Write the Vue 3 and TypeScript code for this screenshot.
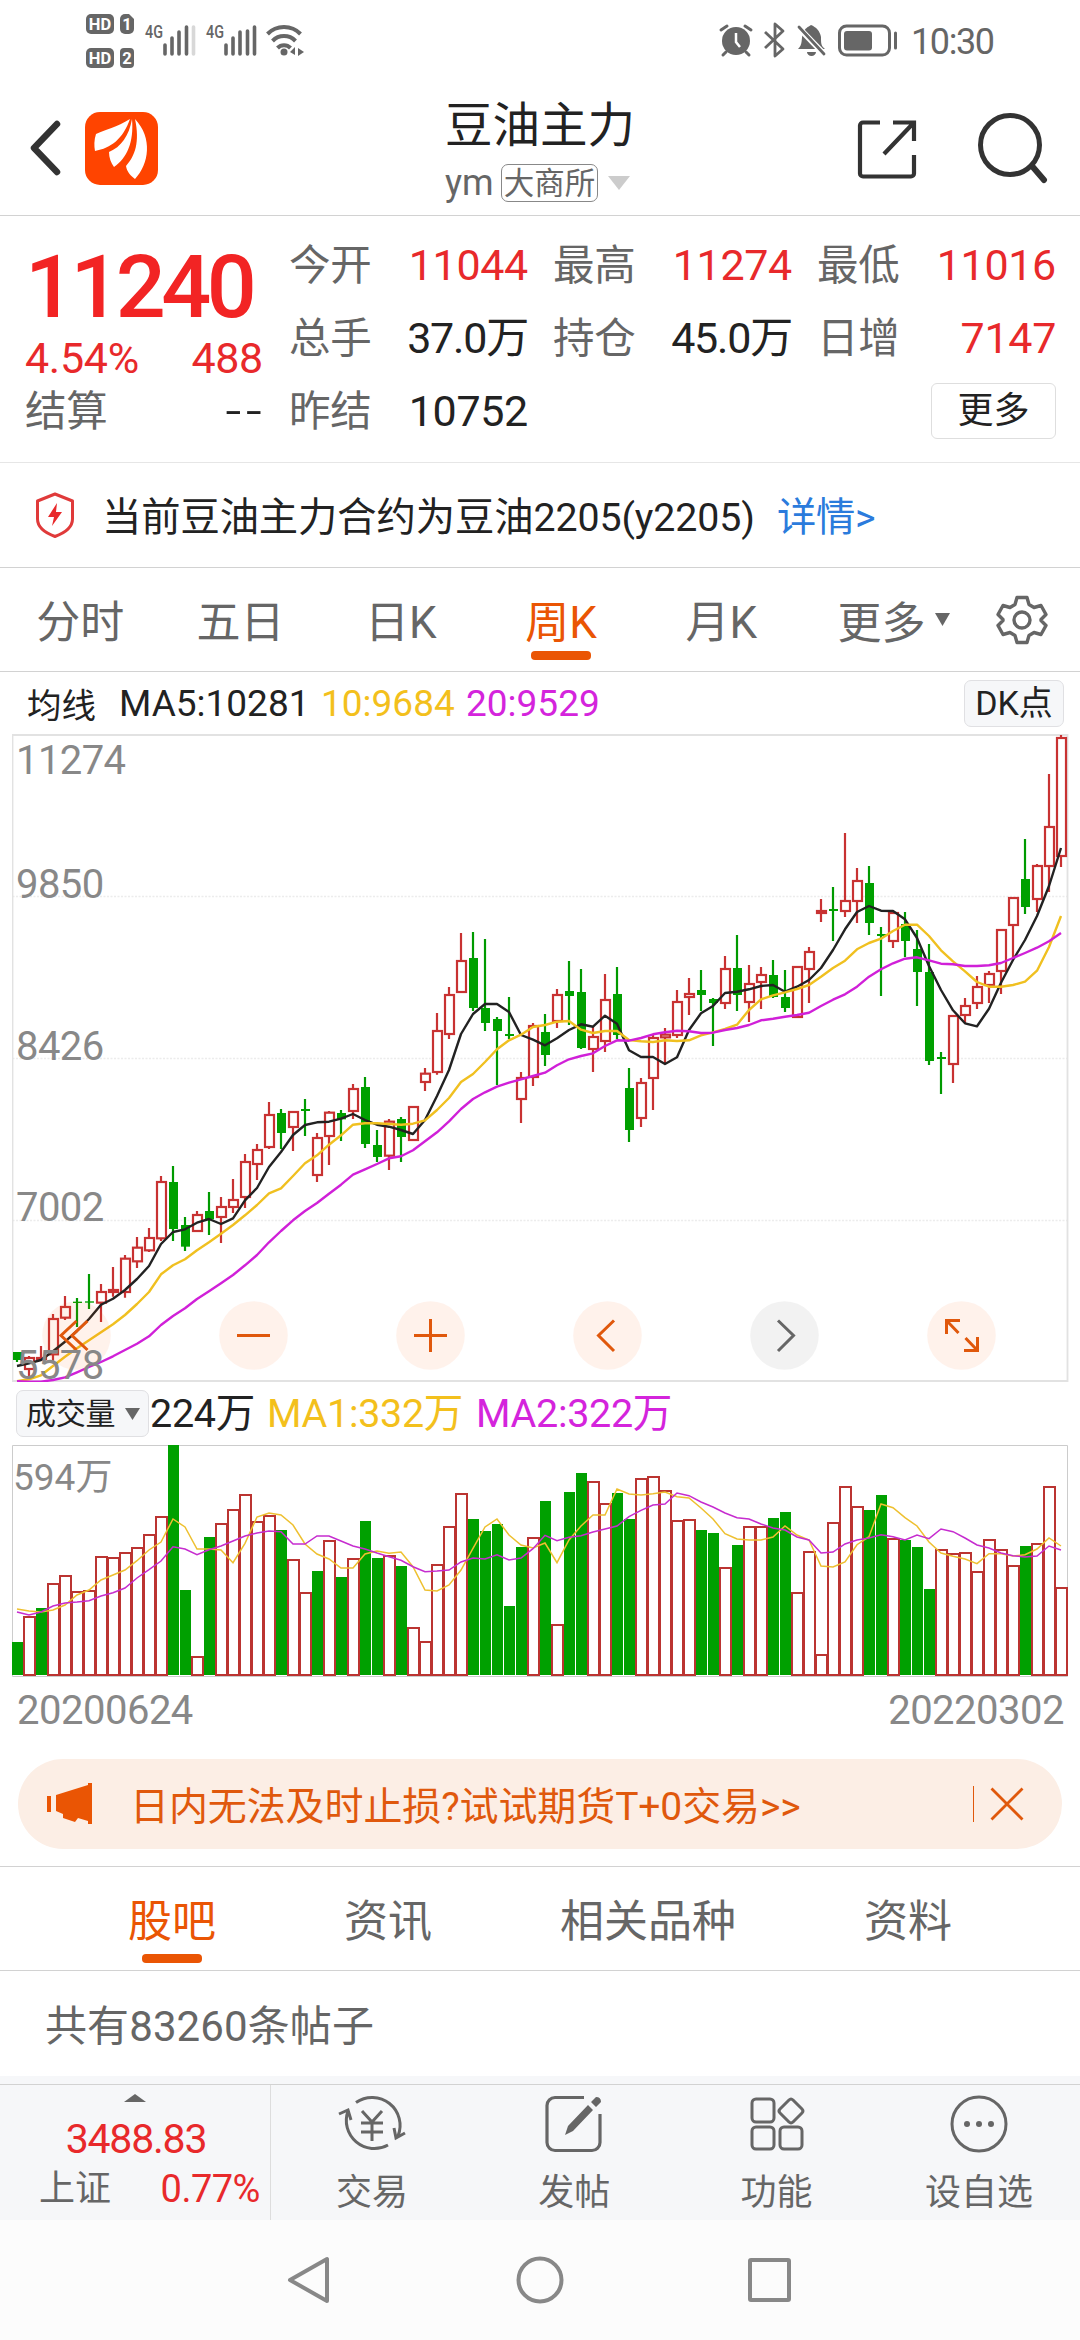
<script setup lang="ts">
interface Candle {
  x: number
  up: boolean
  high: number
  top: number
  bottom: number
  low: number
}

type Row = [0 | 1, number, number, number, number]

const STEP = 12
const cx = (i: number): number => 5 + STEP * i

// Price rows: [rising, high, body top, body bottom, low], in thirds of a pixel from the block's base line.
const priceBlocks: { base: number; rows: Row[] }[] = [
  {
    base: 396,
    rows: [
      [0, 666, 666, 690, 696], [1, 678, 684, 717, 738], [1, 648, 684, 688, 690], [1, 552, 567, 673, 692],
      [1, 498, 531, 563, 570], [0, 504, 515, 519, 591], [0, 432, 514, 518, 537], [1, 462, 486, 518, 576],
      [1, 411, 480, 486, 500], [1, 375, 386, 486, 503], [1, 321, 353, 394, 414], [1, 294, 324, 361, 366],
      [1, 138, 156, 325, 333], [0, 108, 156, 297, 333], [0, 261, 285, 350, 363], [1, 243, 255, 303, 306],
      [0, 186, 243, 268, 315], [1, 201, 231, 261, 339], [1, 147, 210, 231, 249], [1, 72, 96, 201, 234],
      [1, 42, 60, 102, 150],
    ],
  },
  {
    base: 166,
    rows: [
      [1, 606, 645, 741, 747], [0, 627, 639, 699, 747], [1, 633, 636, 681, 753], [0, 597, 627, 633, 708],
      [1, 699, 714, 825, 846], [1, 633, 638, 708, 795], [0, 630, 639, 658, 723], [1, 552, 567, 633, 657],
      [0, 531, 561, 732, 744], [0, 690, 735, 771, 786], [1, 657, 665, 767, 810], [0, 651, 657, 711, 786],
      [1, 618, 621, 720, 723], [1, 504, 521, 546, 573], [1, 339, 393, 516, 524], [1, 261, 285, 402, 417],
      [1, 99, 183, 276, 279], [0, 96, 174, 324, 333], [0, 117, 324, 369, 393], [0, 351, 357, 393, 555],
      [0, 291, 402, 408, 417], [1, 516, 534, 597, 669], [1, 369, 378, 531, 558], [0, 342, 396, 465, 498],
      [1, 267, 285, 363, 384], [0, 183, 273, 288, 375], [0, 207, 276, 444, 447], [1, 378, 411, 447, 516],
      [1, 222, 300, 423, 456], [0, 201, 282, 405, 417], [0, 504, 564, 690, 726], [1, 534, 549, 654, 681],
      [1, 405, 414, 534, 630], [1, 384, 404, 412, 492], [1, 270, 306, 405, 414], [1, 234, 282, 291, 345],
      [0, 210, 270, 285, 333], [0, 294, 297, 309, 438],
    ],
  },
  {
    base: -14,
    rows: [
      [1, 708, 747, 849, 867], [0, 645, 744, 825, 873], [1, 735, 792, 846, 906], [1, 741, 765, 786, 867],
      [0, 720, 765, 831, 834], [0, 750, 831, 864, 876], [1, 738, 741, 891, 894], [1, 681, 696, 747, 849],
      [1, 537, 573, 579, 606], [0, 501, 567, 573, 663], [1, 339, 543, 573, 591], [1, 444, 483, 543, 609],
      [0, 438, 489, 609, 645], [0, 621, 642, 648, 828], [1, 576, 579, 663, 684], [0, 576, 612, 663, 711],
      [0, 630, 687, 756, 858], [0, 672, 756, 1023, 1035], [0, 996, 1011, 1017, 1122], [1, 885, 888, 1032, 1089],
      [1, 834, 858, 885, 909], [1, 768, 801, 849, 867], [1, 753, 762, 795, 849], [1, 627, 630, 753, 822],
      [1, 531, 534, 615, 720], [0, 357, 477, 561, 582], [1, 432, 438, 537, 576], [1, 162, 321, 438, 516],
      [1, 45, 54, 408, 441],
    ],
  },
]

const candles: Candle[] = priceBlocks
  .flatMap(({ base, rows }) => rows.map(([up, ...v]) => ({ up: up === 1, v: v.map((n) => base + n / 3) })))
  .map(({ up, v }, i) => ({ x: cx(i), up, high: v[0], top: v[1], bottom: v[2], low: v[3] }))

const line = (blocks: [number, number[]][]): string =>
  blocks
    .flatMap(([base, values]) => values.map((v) => base + v / 3))
    .map((y, i) => `${cx(i)},${y.toFixed(1)}`)
    .join(' ')

const ma5 = line([
  [396, [708, 700, 690, 664, 635, 603, 567, 524, 506, 480, 447, 408, 342, 306, 298, 278, 267, 282, 265, 211, 174]],
  [166, [801, 756, 705, 675, 667, 665, 656, 642, 660, 674, 680, 690, 702, 660, 588, 510, 402, 342, 312, 312, 336, 405, 419, 436, 415, 390, 373, 380, 347, 371, 451, 471, 471, 492, 472, 390, 340, 318]],
  [-14, [819, 815, 808, 798, 795, 815, 800, 780, 744, 690, 628, 576, 558, 572, 573, 598, 654, 738, 810, 871, 910, 919, 866, 788, 720, 660, 588, 498, 384]],
])
const ma10 = line([
  [396, [754, 748, 736, 708, 680, 655, 631, 607, 583, 555, 522, 486, 433, 406, 388, 361, 337, 311, 285, 256, 225]],
  [166, [880, 865, 828, 790, 766, 734, 706, 674, 670, 670, 672, 674, 671, 661, 630, 594, 546, 522, 486, 448, 421, 404, 381, 375, 365, 363, 389, 399, 393, 393, 420, 424, 426, 421, 423, 421, 406, 397]],
  [-14, [927, 914, 870, 838, 826, 817, 807, 795, 770, 744, 722, 688, 669, 656, 633, 614, 614, 648, 691, 724, 754, 786, 800, 800, 795, 785, 752, 681, 588]],
])
const ma20 = line([
  [396, [754, 755, 755, 750, 742, 727, 711, 696, 679, 660, 641, 619, 585, 558, 535, 507, 484, 460, 435, 406, 375]],
  [166, [1027, 993, 961, 933, 909, 881, 854, 824, 808, 792, 775, 769, 751, 724, 697, 664, 627, 597, 577, 560, 548, 538, 528, 518, 496, 478, 468, 460, 438, 421, 422, 414, 403, 397, 392, 394, 399, 398]],
  [-14, [930, 924, 915, 901, 896, 890, 885, 878, 858, 839, 823, 800, 770, 748, 730, 716, 712, 721, 731, 733, 738, 738, 736, 729, 714, 699, 683, 664, 639]],
])

const volumeTops = [
  786, 711, 684, 612, 588, 636, 633, 531, 534, 519, 504, 465, 411, 195, 630, 831, 471, 432, 390, 345, 426, 408,
  450, 540, 639, 573, 483, 591, 537, 423, 534, 528, 558, 744, 786, 555, 441, 342, 417, 453, 432, 678, 501, 474,
  363, 735, 336, 279, 306, 372, 339, 417, 297, 291, 333, 423, 420, 450, 459, 564, 495, 441, 441, 414, 396, 639,
  516, 825, 429, 321, 381, 390, 345, 477, 480, 501, 627, 510, 522, 519, 576, 480, 510, 558, 498, 492, 321, 624,
]
const falling = new Set([
  0, 2, 13, 14, 16, 22, 25, 27, 29, 30, 32, 38, 39, 40, 41, 42, 44, 46, 47, 50, 51, 57, 58, 60, 63, 64, 71, 72, 74,
  75, 76, 84,
])
const volumes = volumeTops.map((v, i) => ({ x: cx(i), up: !falling.has(i), y: v / 3 - 65 }))

const volMa1 = line([[-65, [
  687, 693, 696, 690, 675, 645, 630, 600, 585, 570, 542, 510, 486, 417, 441, 507, 507, 510, 548, 490, 411, 399, 405,
  435, 492, 522, 537, 564, 564, 522, 513, 520, 516, 560, 630, 633, 615, 570, 505, 441, 417, 465, 495, 504, 489, 548,
  480, 438, 405, 405, 327, 342, 345, 341, 336, 350, 354, 384, 417, 461, 477, 480, 480, 471, 438, 465, 480, 558, 561,
  546, 494, 470, 372, 383, 413, 438, 486, 519, 529, 537, 551, 521, 521, 528, 524, 507, 474, 498,
]]])
const volMa2 = line([[-65, [
  696, 705, 696, 678, 669, 666, 662, 648, 638, 624, 594, 569, 543, 500, 507, 524, 509, 498, 483, 468, 459, 453, 455,
  492, 492, 468, 468, 483, 498, 507, 519, 530, 541, 560, 575, 573, 570, 546, 534, 537, 524, 540, 534, 506, 466, 482,
  472, 467, 456, 447, 438, 410, 391, 375, 372, 339, 347, 366, 381, 399, 413, 417, 432, 444, 450, 471, 480, 519, 516,
  492, 480, 474, 464, 470, 480, 465, 476, 447, 455, 474, 495, 504, 519, 527, 531, 528, 498, 510,
]]])

const axis = ['11274', '9850', '8426', '7002', '5578']

const quotes = [
  [
    { label: '今开', value: '11044', red: true },
    { label: '总手', value: '37.0万', red: false },
    { label: '昨结', value: '10752', red: false },
  ],
  [
    { label: '最高', value: '11274', red: true },
    { label: '持仓', value: '45.0万', red: false },
  ],
  [
    { label: '最低', value: '11016', red: true },
    { label: '日增', value: '7147', red: true },
  ],
]

const periods = ['分时', '五日', '日K', '周K', '月K']
const sections = ['股吧', '资讯', '相关品种', '资料']
</script>

<template>
  <div class="screen">
    <div class="status">
      <svg class="status-left" width="240" height="70" viewBox="80 0 240 70">
        <g fill="#666">
          <rect x="86" y="14" width="28" height="20" rx="5" />
          <path d="M120 19a5 5 0 0 1 5-5h4l5 5v10a5 5 0 0 1-5 5h-4a5 5 0 0 1-5-5z" />
          <rect x="86" y="48" width="28" height="20" rx="5" />
          <rect x="120" y="48" width="14" height="20" rx="4" />
        </g>
        <g class="badge" fill="#fff">
          <text x="100" y="30" text-anchor="middle">HD</text>
          <text x="127" y="30" text-anchor="middle">1</text>
          <text x="100" y="64" text-anchor="middle">HD</text>
          <text x="127" y="64" text-anchor="middle">2</text>
        </g>
        <g class="gen" fill="#666">
          <text x="145" y="38" textLength="18" lengthAdjust="spacingAndGlyphs">4G</text>
          <text x="206" y="38" textLength="18" lengthAdjust="spacingAndGlyphs">4G</text>
        </g>
        <g stroke="#666" stroke-width="3.600" stroke-linecap="round">
          <path d="M165 45V54M172 38V54M179 32V54M186.500 27V54" />
          <path d="M193.500 27V54" stroke="#d8d8d8" />
          <path d="M226 45V54M233 38V54M240 32V54M247.500 31V54M254.500 27V54" />
        </g>
        <g fill="none" stroke="#666" stroke-width="4">
          <path d="M267.500 34a23 23 0 0 1 33 0" />
          <path d="M272.500 41a16 16 0 0 1 23 0" />
          <path d="M277.500 48a9 9 0 0 1 13 0" />
        </g>
        <circle cx="284" cy="52" r="3.500" fill="#666" />
        <path d="M290 52l5-5v8zM298 48l6 4-6 4z" fill="#666" />
      </svg>
      <svg class="status-right" width="186" height="70" viewBox="714 0 186 70">
        <circle cx="736" cy="41" r="14" fill="#666" />
        <path d="M721 30l6-4M751 30l-6-4M726 52l-3 3M746 52l3 3" stroke="#666" stroke-width="3" stroke-linecap="round" />
        <path d="M736 33v9l4 5" fill="none" stroke="#fff" stroke-width="2.500" />
        <path d="M765 32l18 17-8 7V24l8 7-18 17" fill="none" stroke="#666" stroke-width="2.800" stroke-linejoin="round" />
        <path d="M798 49c5-4 3-11 5-16 2-5 5-6 8-8 5 2 9 6 10 12 0 6 0 9 4 12z" fill="#666" />
        <path d="M798 27l27 28" stroke="#fff" stroke-width="6" />
        <path d="M799 27l25 27" stroke="#666" stroke-width="2.800" stroke-linecap="round" />
        <path d="M807 52h9a4.500 4 0 0 1-9 0" fill="#666" />
        <rect x="839.500" y="26" width="50" height="29" rx="7" fill="none" stroke="#666" stroke-width="3" />
        <rect x="844" y="31" width="28" height="19.500" rx="3" fill="#666" />
        <path d="M895.500 33v15" stroke="#666" stroke-width="3" stroke-linecap="round" />
      </svg>
      <span class="clock">10:30</span>
    </div>

    <header class="header">
      <svg class="back" width="34" height="60" viewBox="0 0 34 60">
        <path d="M29 6L6 30l23 24" fill="none" stroke="#333" stroke-width="6.500" stroke-linecap="round" stroke-linejoin="round" />
      </svg>
      <svg class="logo" width="73" height="73" viewBox="0 0 73 73">
        <rect width="73" height="73" rx="15" fill="#ff4400" />
        <path d="M45 7C32 15 20 18 11 22c-2 6-2 12-1 17C26 36 38 27 45 7z" fill="#fff" />
        <path d="M47 7C44 24 36 35 24 40c0 6 2 11 5 15C42 46 49 30 47 7z" fill="#fff" />
        <path d="M50 7C55 30 50 44 41 54c1 6 5 10 9 13C64 52 68 26 50 7z" fill="#fff" />
      </svg>
      <div class="title">
        <div class="name">豆油主力</div>
        <div class="code">
          <span class="sym">ym</span><span class="exch">大商所</span>
          <svg width="22" height="14"><path d="M0 0h22L11 14z" fill="#ccc" /></svg>
        </div>
      </div>
      <svg class="share" width="60" height="60" viewBox="0 0 60 60">
        <path d="M23 3.500H6a3 3 0 0 0-3 3v48a3 3 0 0 0 3 3h48a3 3 0 0 0 3-3V36M36 3.500H57V22M57 3.500L27 35" fill="none" stroke="#333" stroke-width="4.200" />
      </svg>
      <svg class="search" width="70" height="72" viewBox="0 0 70 72">
        <circle cx="32" cy="33" r="29.500" fill="none" stroke="#333" stroke-width="5" />
        <path d="M54 54l12 14" stroke="#333" stroke-width="6" stroke-linecap="round" />
      </svg>
    </header>

    <section class="quote">
      <div class="col main">
        <div class="price">11240</div>
        <div class="pair change"><span>4.54%</span><span>488</span></div>
        <div class="pair"><span class="label">结算</span><span class="dash">--</span></div>
      </div>
      <div v-for="(col, c) in quotes" :key="c" class="col">
        <div v-for="q in col" :key="q.label" class="pair">
          <span class="label">{{ q.label }}</span>
          <span class="value" :class="{ red: q.red, unit: q.value.endsWith('万') }">{{ q.value }}</span>
        </div>
        <button v-if="c === 2" class="more">更多</button>
      </div>
    </section>

    <section class="notice">
      <svg width="40" height="46" viewBox="0 0 40 46">
        <path d="M20 2l17.500 7v18c0 9-8 14-17.500 17.500C10.500 41 2.500 36 2.500 27V9z" fill="none" stroke="#e03a3a" stroke-width="3" stroke-linejoin="round" />
        <path d="M22 11l-9 14h6l-2 9 10-14h-6z" fill="#e8292b" />
      </svg>
      <span class="msg">当前豆油主力合约为豆油2205(y2205)</span>
      <a class="detail">详情&gt;</a>
    </section>

    <nav class="periods">
      <div v-for="p in periods" :key="p" class="period" :class="{ active: p === '周K' }">{{ p }}</div>
      <div class="period-more">更多<svg width="15" height="13"><path d="M0 0h15L7.500 13z" fill="#666" /></svg></div>
      <svg class="gear" width="52" height="52" viewBox="0 0 52 52">
        <path d="M21 3.500h10l2 7 5 3 7-2 5 9-5 5v1l5 5-5 9-7-2-5 3-2 7H21l-2-7-5-3-7 2-5-9 5-5v-1l-5-5 5-9 7 2 5-3z" fill="none" stroke="#666" stroke-width="3.400" stroke-linejoin="round" />
        <circle cx="26" cy="26" r="8" fill="none" stroke="#666" stroke-width="3.400" />
      </svg>
    </nav>

    <div class="legend">
      <span class="avg">均线</span>
      <span class="m5">MA5:10281</span>
      <span class="m10">10:9684</span>
      <span class="m20">20:9529</span>
      <span class="dk">DK点</span>
    </div>

    <div class="chart">
      <svg width="1057" height="648" viewBox="0 0 1057 648">
        <path d="M0.500 162.500H1055M0.500 324.500H1055M0.500 486.500H1055" stroke="#ececec" stroke-width="1.500" stroke-dasharray="2 1.500" />
        <path d="M0.500 1H1055.500V647H0.500z" fill="none" stroke="#e2e2e2" stroke-width="1.800" />
        <g v-for="c in candles" :key="c.x">
          <template v-if="c.up">
            <path :d="`M${c.x} ${c.high}V${c.top}M${c.x} ${c.bottom}V${c.low}`" stroke="#c83232" stroke-width="2.200" />
            <rect :x="c.x - 4" :y="c.top" width="9" :height="c.bottom - c.top" fill="#fff" stroke="#c83232" stroke-width="2.200" />
          </template>
          <template v-else>
            <path :d="`M${c.x} ${c.high}V${c.low}`" stroke="#009a00" stroke-width="2.200" />
            <rect :x="c.x - 4" :y="c.top" width="9" :height="c.bottom - c.top" fill="#00a000" />
          </template>
        </g>
        <g fill="none" stroke-width="2.400" stroke-linejoin="round">
          <polyline :points="ma5" stroke="#222" />
          <polyline :points="ma10" stroke="#f0c020" />
          <polyline :points="ma20" stroke="#d020d8" />
        </g>
        <g fill="#ff5a00" fill-opacity="0.080">
          <circle cx="64.500" cy="601.500" r="34.300" />
          <circle cx="241.500" cy="601.500" r="34.300" />
          <circle cx="418.500" cy="601.500" r="34.300" />
          <circle cx="595.500" cy="601.500" r="34.300" />
          <circle cx="772.500" cy="601.500" r="34.300" fill="#000" fill-opacity="0.050" />
          <circle cx="949.500" cy="601.500" r="34.300" />
        </g>
        <g fill="none" stroke="#e0580c" stroke-width="3">
          <path d="M64.500 587L49 601.500l15.500 14.500M75.500 587L60 601.500l15.500 14.500" />
          <path d="M225 601.500h33M402 601.500h33M418.500 585v33" />
          <path d="M602 586.500L586.500 601.500l15.500 15.500" />
          <path d="M766 586.500l15.500 15-15.500 15.500" stroke="#666" />
          <path d="M948 586.500H934.500V600M934.500 586.500l12 12.500M952 616.500H965.500V603M965.500 616.500l-12-12.500" />
        </g>
      </svg>
      <span v-for="(a, i) in axis" :key="a" class="axis" :class="'a' + i">{{ a }}</span>
    </div>

    <div class="vol-legend">
      <span class="pick">成交量<svg width="15" height="12"><path d="M0 0h15L7.500 12z" fill="#666" /></svg></span>
      <span class="v0">224万</span>
      <span class="v1">MA1:332万</span>
      <span class="v2">MA2:322万</span>
    </div>

    <div class="volume">
      <svg width="1057" height="232" viewBox="0 0 1057 232">
        <path d="M0.500 0.500H1055.500V231.500H0.500z" fill="none" stroke="#ccc" />
        <template v-for="v in volumes" :key="v.x">
          <rect v-if="v.up" :x="v.x - 5" :y="v.y" width="11" :height="230 - v.y" fill="#fff" stroke="#bb3431" stroke-width="2" />
          <rect v-else :x="v.x - 5" :y="v.y" width="11" :height="230 - v.y" fill="#00a000" />
        </template>
        <polyline :points="volMa1" fill="none" stroke="#eec030" stroke-width="1.500" />
        <polyline :points="volMa2" fill="none" stroke="#c62ccf" stroke-width="1.500" />
      </svg>
      <span class="vol-max">594万</span>
    </div>
    <div class="dates"><span>20200624</span><span>20220302</span></div>

    <div class="promo">
      <svg width="46" height="42" viewBox="0 0 46 42">
        <path d="M0 13h4v16H0zM9 12L41 2V0h4v41h-4v-3l-10-3-3 4-12-4v-4l-7-3z" fill="#ea5504" />
      </svg>
      <span class="promo-text">日内无法及时止损?试试期货T+0交易&gt;&gt;</span>
      <i class="bar" />
      <svg width="34" height="34" viewBox="0 0 34 34"><path d="M1.500 1.500l31 31M32.500 1.500l-31 31" stroke="#e0580c" stroke-width="2.800" /></svg>
    </div>

    <nav class="sections">
      <div v-for="s in sections" :key="s" class="section" :class="{ active: s === '股吧' }">{{ s }}</div>
    </nav>
    <div class="posts">共有83260条帖子</div>

    <footer class="bottom">
      <div class="index">
        <svg width="22" height="8"><path d="M0 8L11 0l11 8z" fill="#666" /></svg>
        <div class="idx-val">3488.83</div>
        <div class="idx-row"><span>上证</span><span class="pct">0.77%</span></div>
      </div>
      <div class="tool">
        <svg width="70" height="60" viewBox="0 0 70 60" fill="none" stroke="#666" stroke-width="3">
          <path d="M19 8.500A28 28 0 0 1 61 42M51 51A28 28 0 0 1 11 17M2 20l9-4 3 10M68 39l-9 5-2-10" />
          <path d="M25 17l10 11 10-11M24 29h22M24 38h22M35 28v19" />
        </svg>
        <span>交易</span>
      </div>
      <div class="tool">
        <svg width="60" height="60" viewBox="0 0 60 60">
          <path d="M40 3.500H11a8 8 0 0 0-8 8v37a8 8 0 0 0 8 8h37a8 8 0 0 0 8-8V20" fill="none" stroke="#666" stroke-width="3.200" />
          <path d="M44 11l5 5-20 21-8 4 3-9zM47 8l5-5q5 0 5 5l-5 5z" fill="#666" />
        </svg>
        <span>发帖</span>
      </div>
      <div class="tool">
        <svg width="60" height="60" viewBox="0 0 60 60" fill="none" stroke="#666" stroke-width="3">
          <rect x="5" y="5" width="22" height="23" rx="4" />
          <rect x="5" y="33" width="22" height="22" rx="4" />
          <rect x="33" y="33" width="22" height="22" rx="4" />
          <path d="M42 6q2-2 4 0l9 9q2 2 0 4l-9 9q-2 2-4 0l-9-9q-2-2 0-4z" />
        </svg>
        <span>功能</span>
      </div>
      <div class="tool">
        <svg width="60" height="60" viewBox="0 0 60 60">
          <circle cx="30" cy="30" r="27" fill="none" stroke="#666" stroke-width="3" />
          <g fill="#666"><circle cx="18" cy="30" r="3" /><circle cx="30" cy="30" r="3" /><circle cx="42" cy="30" r="3" /></g>
        </svg>
        <span>设自选</span>
      </div>
    </footer>

    <div class="sysnav">
      <svg width="1080" height="120" viewBox="0 0 1080 120" fill="none" stroke="#888" stroke-width="4" stroke-linejoin="round">
        <path d="M327 39v42L290 60z" />
        <circle cx="540" cy="60" r="21.500" />
        <rect x="750" y="40" width="39" height="40" rx="1" />
      </svg>
    </div>
  </div>
</template>

<style>
body {
  margin: 0;
  background: #fff;
}
</style>

<style scoped>
.screen {
  width: 1080px;
  height: 2340px;
  display: flex;
  flex-direction: column;
  overflow: hidden;
  background: #fff;
  color: #222;
  font-family: Roboto, 'Noto Sans CJK SC', sans-serif;
  white-space: nowrap;
}
.screen > * {
  box-sizing: border-box;
  flex: none;
}
svg {
  display: block;
  flex: none;
}
.status {
  height: 80px;
  display: flex;
  padding-left: 80px;
}
.status-right {
  margin-left: 394px;
}
.badge {
  font: 700 16.500px Roboto, sans-serif;
}
.gen {
  font: 500 18px Roboto, sans-serif;
}
.clock {
  margin-left: 11px;
  font-size: 36px;
  line-height: 84px;
  color: #666;
  letter-spacing: -1.4px;
}
.header {
  height: 136px;
  display: flex;
  align-items: flex-start;
  border-bottom: 1px solid #d2d2d2;
}
.back {
  margin: 38px 0 0 28px;
}
.logo {
  margin: 32px 0 0 23px;
}
.title {
  width: 202px;
  margin: 16px 0 0 287px;
}
.name {
  font-size: 47.500px;
  line-height: 60px;
}
.code {
  display: flex;
  align-items: center;
  height: 40px;
  margin-top: 7px;
  font-size: 36px;
  color: #666;
}
.sym {
  width: 56px;
}
.exch {
  box-sizing: border-box;
  width: 97px;
  height: 38px;
  margin-right: 10px;
  border: 1.500px solid #888;
  border-radius: 7px;
  font-size: 30.500px;
  line-height: 37px;
  text-align: center;
}
.share {
  margin: 39px 0 0 210px;
}
.search {
  margin: 32px 0 0 61px;
}
.quote {
  height: 247px;
  display: grid;
  grid-template-columns: repeat(4, 238px);
  gap: 26px;
  padding: 13px 25px 0;
  border-bottom: 1px solid #e6e6e6;
}
.pair {
  display: flex;
  justify-content: space-between;
  height: 73px;
  line-height: 73px;
  font-size: 43px;
  letter-spacing: -0.3px;
}
.label {
  color: #666;
  font-size: 41.500px;
}
.value {
  margin-right: -1px;
  color: #222;
}
.value.unit {
  letter-spacing: -1.200px;
}
.red {
  color: #e8292b;
}
.price {
  height: 112px;
  line-height: 116px;
  font-size: 88px;
  font-weight: 500;
  letter-spacing: -4.600px;
  color: #f22424;
}
.change {
  height: 34px;
  line-height: 34px;
  color: #e8292b;
}
.dash {
  margin-right: -3px;
  font-size: 57px;
  font-weight: 300;
  letter-spacing: 4px;
}
.more {
  float: right;
  box-sizing: border-box;
  width: 125px;
  height: 56px;
  margin: 8px -1px 0 0;
  border: 1.500px solid #dedede;
  border-radius: 6px;
  background: #fff;
  color: #222;
  font: 36px/50px Roboto, 'Noto Sans CJK SC', sans-serif;
  padding: 0;
}
.notice {
  height: 105px;
  display: flex;
  align-items: center;
  padding-left: 35px;
  border-bottom: 1px solid #d2d2d2;
  font-size: 39.300px;
}
.msg {
  margin: -4px 0 0 27px;
  letter-spacing: -0.080px;
}
.detail {
  margin: -4px 0 0 22px;
  letter-spacing: -0.300px;
  color: #2b7bdc;
}
.periods {
  height: 104px;
  display: flex;
  align-items: center;
  border-bottom: 1px solid #d2d2d2;
  color: #666;
  font-size: 44px;
}
.period {
  position: relative;
  width: 160.300px;
  margin-top: 6px;
  line-height: 102px;
  text-align: center;
}
.active {
  color: #ea5504;
}
.period.active::after,
.section.active::after {
  content: '';
  position: absolute;
  left: calc(50% - 30px);
  bottom: 14px;
  width: 60px;
  height: 9px;
  border-radius: 4px;
  background: #ea5504;
}
.section.active::after {
  bottom: 7px;
}
.period-more {
  display: flex;
  align-items: center;
  gap: 10px;
  margin-left: 36px;
}
.gear {
  margin-left: 46px;
}
.legend {
  height: 62px;
  display: flex;
  align-items: center;
  padding: 0 16px 0 27px;
  font-size: 37px;
}
.avg {
  width: 92px;
  font-size: 34.500px;
}
.m5 {
  width: 202px;
}
.m10 {
  width: 145px;
  color: #f3c01c;
}
.m20 {
  flex: 1;
  color: #d424dc;
}
.dk {
  box-sizing: border-box;
  width: 100px;
  height: 47px;
  border: 1.500px solid #e0e0e3;
  border-radius: 7px;
  background: #f6f7f9;
  font-size: 34px;
  line-height: 45px;
  text-align: center;
}
.chart {
  position: relative;
  height: 648px;
  padding-left: 12px;
}
.axis {
  position: absolute;
  left: 16px;
  font-size: 40px;
  line-height: 40px;
  color: #888;
  letter-spacing: -0.600px;
}
.a0 { top: 7px; }
.a1 { top: 131px; }
.a2 { top: 293px; }
.a3 { top: 454px; }
.a4 { top: 612px; }
.vol-legend {
  height: 63px;
  display: flex;
  align-items: center;
  padding-left: 16px;
  font-size: 39.500px;
  line-height: 62px;
  letter-spacing: -0.300px;
}
.pick {
  box-sizing: border-box;
  display: flex;
  align-items: center;
  gap: 10px;
  width: 133px;
  height: 47px;
  padding-left: 9px;
  border: 1.500px solid #e0e0e3;
  border-radius: 7px;
  background: #f6f7f9;
  font-size: 30px;
  line-height: 44px;
}
.v0 {
  width: 117px;
  margin-left: 1px;
}
.v1 {
  width: 209px;
  color: #f3c01c;
}
.v2 {
  color: #d424dc;
}
.volume {
  position: relative;
  height: 232px;
  padding-left: 12px;
}
.vol-max {
  position: absolute;
  left: 13px;
  top: 13px;
  font-size: 37px;
  line-height: 40px;
  color: #888;
}
.dates {
  display: flex;
  justify-content: space-between;
  height: 82px;
  padding: 0 16px 0 17px;
  font-size: 40px;
  line-height: 68px;
  color: #888;
  letter-spacing: -0.500px;
}
.promo {
  display: flex;
  align-items: center;
  height: 90px;
  margin: 0 18px 17px;
  padding-left: 29px;
  border-radius: 45px;
  background: #fceee5;
  color: #e0580c;
  font-size: 39px;
}
.promo-text {
  width: 843px;
  margin: -3px 0 0 37px;
  letter-spacing: -0.100px;
}
.bar {
  width: 1px;
  height: 36px;
  margin-right: 16px;
  background: #e0580c;
}
.sections {
  height: 105px;
  display: flex;
  justify-content: space-evenly;
  border-top: 1px solid #d2d2d2;
  border-bottom: 1px solid #d2d2d2;
  color: #666;
  font-size: 44px;
  line-height: 111px;
}
.section {
  position: relative;
}
.posts {
  height: 105px;
  padding-left: 45px;
  color: #666;
  font-size: 42px;
  line-height: 112px;
  letter-spacing: 0.100px;
}
.bottom {
  display: flex;
  height: 144px;
  background: linear-gradient(#f6f7f9 8px, #d2d2d2 8px, #d2d2d2 9px, #f6f7f9 9px);
  padding-top: 9px;
  color: #666;
  font-size: 36px;
}
.index {
  box-sizing: border-box;
  width: 271px;
  border-right: 1px solid #ddd;
  display: flex;
  flex-direction: column;
  align-items: center;
  padding-top: 9px;
}
.idx-val {
  margin: 13px 0 0 2px;
  font-size: 41px;
  line-height: 48px;
  letter-spacing: -1.200px;
  color: #e8292b;
}
.idx-row {
  align-self: stretch;
  display: flex;
  justify-content: space-between;
  padding: 0 10px 0 39px;
  font-size: 36px;
  line-height: 53px;
}
.pct {
  color: #e8292b;
  font-size: 38px;
  letter-spacing: -0.500px;
}
.tool {
  width: 202.300px;
  display: flex;
  flex-direction: column;
  align-items: center;
  padding-top: 9px;
  line-height: 79px;
}
.sysnav {
  height: 120px;
  background: #fcfcfc;
}
</style>
